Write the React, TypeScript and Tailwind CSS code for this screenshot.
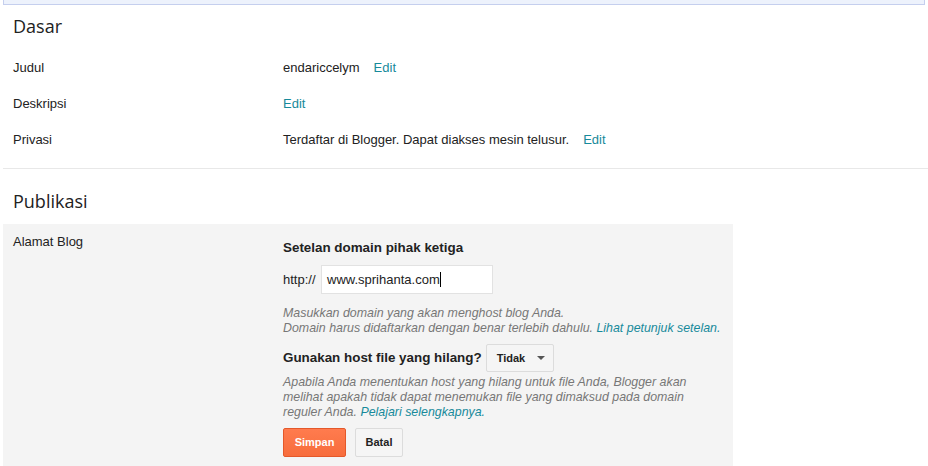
import React from 'react'

const rows = [
  { label: 'Judul', value: 'endariccelym' },
  { label: 'Deskripsi', value: '' },
  { label: 'Privasi', value: 'Terdaftar di Blogger. Dapat diakses mesin telusur.' },
]

export default function App() {
  return (
    <div className="w-[928px] h-[466px] overflow-hidden bg-white text-[13px] text-[#222] font-['Liberation_Sans',Arial,sans-serif]">
      {/* top notice strip */}
      <div className="ml-[3px] w-[922px] h-[5px] bg-[#edf2fc] border-x border-b border-[#c5cfee]" />

      {/* Dasar */}
      <h2 className="pl-[13px] pt-[9px] h-[45px] text-[18px] leading-[24px] text-[#222] font-['Open_Sans',sans-serif]">
        Dasar
      </h2>
      <div className="pb-[10px]">
        {rows.map((r) => (
          <div key={r.label} className="flex h-[36px] items-center">
            <div className="w-[283px] pl-[13px]">{r.label}</div>
            <div className="flex items-center">
              {r.value && <span className="mr-[14px]">{r.value}</span>}
              <a className="text-[#178a9b] cursor-pointer">Edit</a>
            </div>
          </div>
        ))}
      </div>
      <div className="ml-[3px] h-px bg-[#e8e8e8]" />

      {/* Publikasi */}
      <h2 className="pl-[13px] pt-[20px] h-[55px] text-[18px] leading-[24px] text-[#222] font-['Open_Sans',sans-serif]">
        Publikasi
      </h2>
      <div className="ml-[3px] w-[730px] h-[260px] bg-[#f4f4f4] flex pt-[10px]">
        <div className="w-[280px] pl-[10px] leading-[16px]">Alamat Blog</div>
        <div className="w-[445px]">
          <div className="pt-[6px] font-bold text-[13.4px] leading-[16px]">Setelan domain pihak ketiga</div>
          <div className="flex items-center mt-[9px]">
            <span className="w-[38px]">http://</span>
            <div className="w-[172px] h-[29px] bg-white border border-[#e2e2e2] flex items-center px-[5px]">
              <span>www.sprihanta.com</span>
              <span className="inline-block w-px h-[15px] bg-black" />
            </div>
          </div>
          <div className="mt-[12px] text-[12.4px] leading-[15px] italic text-[#777]">
            Masukkan domain yang akan menghost blog Anda.
            <br />
            Domain harus didaftarkan dengan benar terlebih dahulu.{' '}
            <a className="text-[#178a9b] cursor-pointer">Lihat petunjuk setelan.</a>
          </div>
          <div className="flex items-center mt-[8px]">
            <span className="font-bold text-[13.4px] mr-[4px]">Gunakan host file yang hilang?</span>
            <button className="w-[68px] h-[28px] bg-[#f5f5f5] border border-[#dcdcdc] rounded-[2px] flex items-center pl-[10px] text-[11px] font-bold text-[#222]">
              Tidak
              <span className="ml-[12px] w-0 h-0 border-x-[4px] border-x-transparent border-t-[4px] border-t-[#555]" />
            </button>
          </div>
          <div className="mt-[3px] w-[415px] text-[12.4px] leading-[15px] italic text-[#777]">
            Apabila Anda menentukan host yang hilang untuk file Anda, Blogger akan melihat apakah tidak dapat menemukan file yang dimaksud pada domain reguler Anda.{' '}
            <a className="text-[#178a9b] cursor-pointer">Pelajari selengkapnya.</a>
          </div>
          <div className="flex gap-[9px] mt-[8px]">
            <button className="w-[63px] h-[29px] rounded-[2px] border border-[#e4582a] bg-gradient-to-b from-[#ff7b4e] to-[#f76d3c] text-white text-[11px] font-bold">
              Simpan
            </button>
            <button className="w-[48px] h-[29px] rounded-[2px] border border-[#dcdcdc] bg-[#f5f5f5] text-[#222] text-[11px] font-bold">
              Batal
            </button>
          </div>
        </div>
      </div>
    </div>
  )
}
